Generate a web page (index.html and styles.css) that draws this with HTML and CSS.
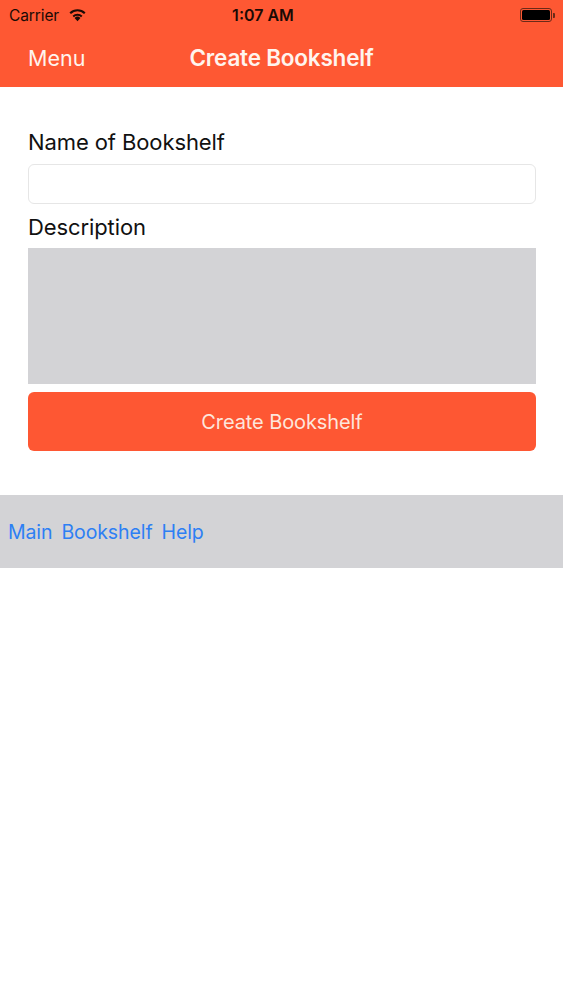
FILE: index.html
```html
<!DOCTYPE html>
<html>
<head>
<meta charset="utf-8">
<link rel="stylesheet" href="styles.css">
</head>
<body>
<div class="header">
  <div class="status">
    <div class="status-left">
      <span class="carrier">Carrier</span>
      <svg class="wifi" width="19" height="14" viewBox="0 0 18 13">
        <path d="M9 12.5 L6.2 9.3 A4 4 0 0 1 11.8 9.3 Z" fill="#1a0a05"/>
        <path d="M4.3 7.2 A6.8 6.8 0 0 1 13.7 7.2 L12.4 8.6 A5 5 0 0 0 5.6 8.6 Z" fill="#1a0a05"/>
        <path d="M1.4 4.1 A10.8 10.8 0 0 1 16.6 4.1 L15.2 5.6 A8.8 8.8 0 0 0 2.8 5.6 Z" fill="#1a0a05"/>
      </svg>
    </div>
    <div class="time">1:07 AM</div>
    <div class="status-right">
      <div class="battery"><div class="battery-fill"></div></div>
      <div class="battery-nub"></div>
    </div>
  </div>
  <div class="nav">
    <span class="nav-left">Menu</span>
    <span class="nav-title">Create Bookshelf</span>
    <span class="nav-right"></span>
  </div>
</div>
<div class="form">
  <label class="label">Name of Bookshelf</label>
  <div class="input"></div>
  <label class="label label-desc">Description</label>
  <div class="textarea"></div>
  <div class="button">Create Bookshelf</div>
</div>
<div class="tabbar">
  <a class="tab">Main</a>
  <a class="tab">Bookshelf</a>
  <a class="tab">Help</a>
</div>
</body>
</html>
```
FILE: styles.css
```css
html, body {
  margin: 0;
  padding: 0;
  background: #ffffff;
  font-family: Inter, "Liberation Sans", sans-serif;
}
body {
  width: 563px;
  height: 1000px;
}
.header {
  background: #fe5833;
  height: 87px;
  display: flex;
  flex-direction: column;
}
.status {
  height: 30px;
  display: flex;
  align-items: center;
  justify-content: space-between;
  padding: 0 8px 0 9px;
  color: #1a0a05;
}
.status-left {
  display: flex;
  align-items: center;
  gap: 9px;
  width: 120px;
}
.carrier {
  font-size: 15.5px;
  letter-spacing: -0.1px;
}
.wifi {
  margin-top: -1px;
}
.time {
  font-size: 16px;
  font-weight: 600;
}
.status-right {
  width: 158px;
  display: flex;
  justify-content: flex-end;
  align-items: center;
}
.battery {
  width: 28px;
  height: 10px;
  border: 1.5px solid #6b2a18;
  border-radius: 3px;
  padding: 1px;
  box-sizing: content-box;
}
.battery-fill {
  width: 100%;
  height: 100%;
  background: #000;
  border-radius: 1.5px;
}
.battery-nub {
  width: 2px;
  height: 5px;
  background: #6b2a18;
  border-radius: 0 1px 1px 0;
  margin-left: 1px;
}
.nav {
  flex: 1;
  display: flex;
  align-items: center;
  justify-content: space-between;
  padding: 0 28px 2px 28px;
  color: #fff4ee;
}
.nav-left {
  font-size: 21.5px;
  width: 130px;
}
.nav-title {
  font-size: 22.5px;
  font-weight: 600;
  letter-spacing: -0.2px;
}
.nav-right {
  width: 130px;
}
.form {
  padding: 40px 27px 0 28px;
  display: flex;
  flex-direction: column;
}
.label {
  font-size: 22px;
  color: #111;
  line-height: 30px;
  letter-spacing: -0.1px;
}
.input {
  margin-top: 7px;
  height: 38px;
  border: 1px solid #e6e6e6;
  border-radius: 6px;
}
.label-desc {
  margin-top: 8px;
}
.textarea {
  margin-top: 6px;
  height: 136px;
  background: #d3d3d6;
}
.button {
  margin-top: 8px;
  height: 59px;
  background: #fe5733;
  border-radius: 6px;
  color: #fde6dc;
  font-size: 20px;
  display: flex;
  align-items: center;
  justify-content: center;
  letter-spacing: -0.1px;
}
.tabbar {
  margin-top: 44px;
  height: 73px;
  background: #d3d3d6;
  display: flex;
  align-items: center;
  gap: 9px;
  padding-left: 8px;
}
.tab {
  color: #2d7ff4;
  font-size: 19.5px;
  letter-spacing: -0.1px;
}
```
